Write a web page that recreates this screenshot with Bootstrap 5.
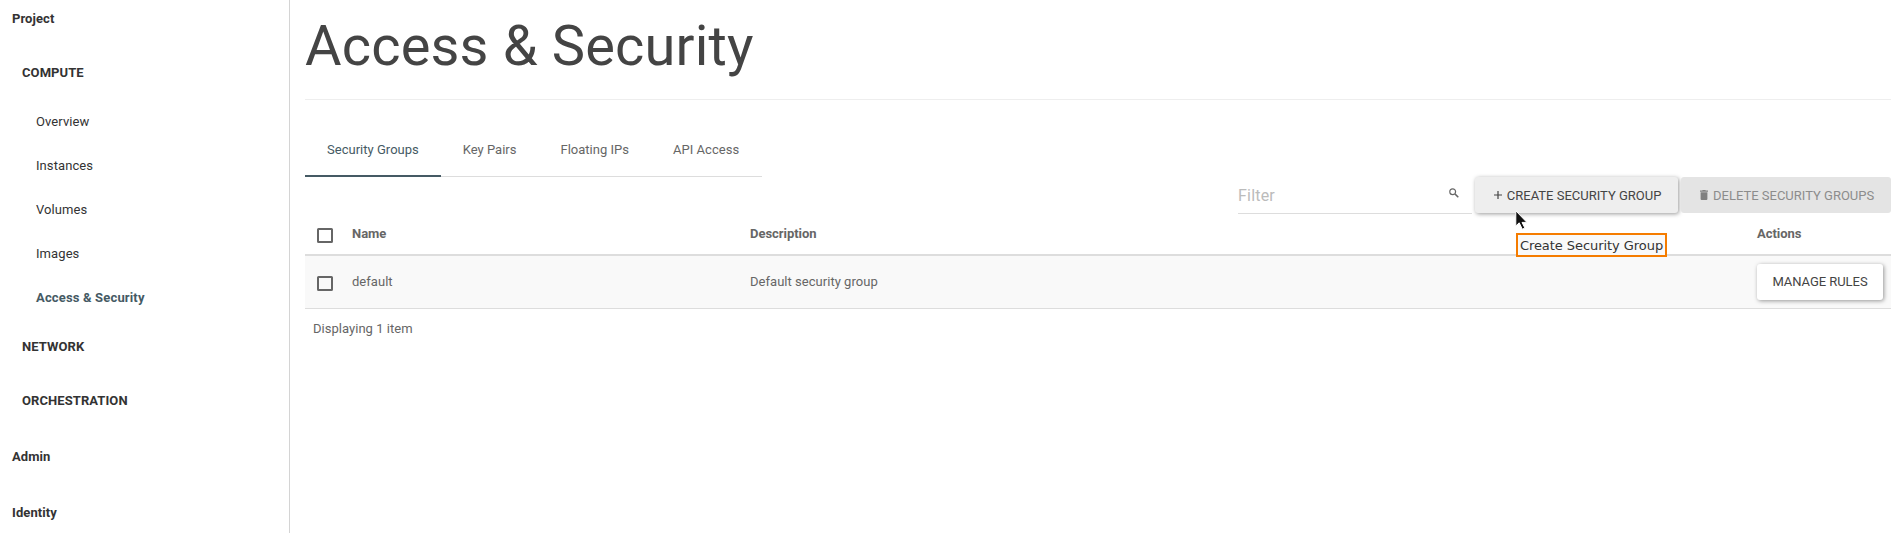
<!DOCTYPE html>
<html lang="en">
<head>
<meta charset="utf-8">
<title>Access &amp; Security</title>
<link href="https://cdn.jsdelivr.net/npm/bootstrap@5.3.0/dist/css/bootstrap.min.css" rel="stylesheet">
<style>
body{font:13px/24px Roboto,sans-serif;letter-spacing:.03px;color:#666;background:#fff}
.shell{height:533px}
.side{width:290px;border-right:1px solid #d4d4d4;color:#333;letter-spacing:.08px}
.side a{color:inherit;text-decoration:none;display:flex;align-items:center;flex:none}
.side .dash{height:56px;padding:2px 0 0 12px;font-weight:700}
.side .dash.first{height:46px;padding:0 0 9px 12px}
.side .group{height:54px;padding-left:22px;font-weight:700;text-transform:uppercase}
.side .panel{height:44px;padding-left:36px}
.side .panel.current{font-weight:700;color:#455a64;letter-spacing:.16px}
.main{padding:0 9px 0 15px}
.title{font-size:56px;line-height:62px;font-weight:400;color:#444;margin:15px 0 0;letter-spacing:.17px}
.head{height:100px;border-bottom:1px solid #eee}
.tabs{margin-top:25px;height:52px}
.tabs .nav-link{color:#666;padding:13px 22px 0;height:52px;box-shadow:inset 0 -1px #ddd;border-radius:0;letter-spacing:.02px}
.tabs .nav-link.active{color:#455a64;box-shadow:inset 0 -2px #455a64}
.tabs .api{letter-spacing:.05px;padding-right:23px}
.tabs .snug{letter-spacing:0}
.tools{height:36px}
.filter{width:234px;height:37px;box-shadow:inset 0 -1px #ddd;margin-right:3px}
.filter input{border:0;background:none;padding:0;margin-top:7px;width:200px;font-size:16px;outline:0;letter-spacing:.2px}
.filter input::placeholder{color:#bbb;opacity:1}
.filter svg{margin:11px 13px 0 0}
.act{font-size:13px;line-height:24px;height:36px;padding:7px 0 5px;border:0;border-radius:3px;text-transform:uppercase;color:#444;letter-spacing:0;white-space:nowrap}
.raised{box-shadow:1px 1px 4px rgba(0,0,0,.4)}
.create{width:203px;background:#eee;margin-right:3px}
.act.create{padding-left:2px}
.act svg{margin-right:2px}
.act.delete,.act.delete:disabled{width:210px;background:#e4e4e4;color:#8c8c8c;opacity:1;padding-left:2px}
.act.rules{width:126px;background:#fff;padding:6px 0;letter-spacing:-.05px}
.grid{table-layout:fixed;width:1586px;margin:0;border-collapse:separate;border-spacing:0}
.grid th,.grid td{padding:0;color:#666;vertical-align:middle;background:none;box-shadow:none}
.grid thead th{height:43px;border-bottom:2px solid #ddd;font-weight:700;letter-spacing:-.04px}
.grid tbody td{height:53px;border-bottom:1px solid #ddd;background:#f9f9f9}
.box{appearance:none;display:block;width:16px;height:15px;margin:4px 0 0 12px;border:2px solid #666;border-radius:1.5px;background:none}
.grid tbody .box{margin-top:2px}
.summary{padding:8px 0 0 8px}
.tip{position:absolute;left:1516px;top:233px;width:151px;height:24px;border:2px solid #f57c00;background:#f9f9f9;color:#333;font:13px/22px "DejaVu Sans",sans-serif;letter-spacing:-.06px;text-align:center;white-space:nowrap}
.pointer{position:absolute;left:1515px;top:210px}
</style>
</head>
<body class="overflow-hidden">
<div class="shell d-flex position-relative overflow-hidden">
  <nav class="side d-flex flex-column flex-shrink-0 overflow-hidden">
    <a class="dash first" href="#">Project</a>
    <a class="group" href="#">Compute</a>
    <a class="panel" href="#">Overview</a>
    <a class="panel" href="#">Instances</a>
    <a class="panel" href="#">Volumes</a>
    <a class="panel" href="#">Images</a>
    <a class="panel current" href="#">Access &amp; Security</a>
    <a class="group" href="#">Network</a>
    <a class="group" href="#">Orchestration</a>
    <a class="dash" href="#">Admin</a>
    <a class="dash" href="#">Identity</a>
  </nav>
  <main class="main flex-grow-1">
    <header class="head d-flex align-items-start"><h1 class="title">Access &amp; Security</h1></header>
    <ul class="nav tabs">
      <li class="nav-item"><a class="nav-link active" href="#">Security Groups</a></li>
      <li class="nav-item"><a class="nav-link snug" href="#">Key Pairs</a></li>
      <li class="nav-item"><a class="nav-link snug" href="#">Floating IPs</a></li>
      <li class="nav-item"><a class="nav-link api" href="#">API Access</a></li>
    </ul>
    <div class="tools d-flex justify-content-end">
      <div class="filter d-flex justify-content-between align-items-start">
        <input type="text" placeholder="Filter" aria-label="Filter">
        <svg width="10" height="10" viewBox="0 0 10 10" fill="none" stroke="#666"><circle cx="3.7" cy="3.7" r="2.900" stroke-width="1.2"/><path d="M5.9 5.9 9.3 9.3" stroke-width="1.5"/></svg>
      </div>
      <button class="btn act raised create"><svg width="8" height="8" viewBox="0 0 8 8" style="vertical-align:1px"><path d="M4 0v8M0 4h8" stroke="#444" stroke-width="1.2"/></svg> Create Security Group</button>
      <button class="btn act delete" disabled><svg width="8" height="10" viewBox="0 0 8 10" style="vertical-align:0"><path d="M0 .6h2.2L2.7 0h2.6l.5.6H8v1.1H0zM.6 2.300h6.800V9q0 1-1 1H1.600q-1 0-1-1z" fill="#808080"/></svg> Delete Security Groups</button>
    </div>
    <table class="table grid">
      <colgroup><col style="width:47px"><col style="width:398px"><col style="width:1007px"><col></colgroup>
      <thead><tr><th><input type="checkbox" class="box" aria-label="Select all"></th><th>Name</th><th>Description</th><th>Actions</th></tr></thead>
      <tbody><tr><td><input type="checkbox" class="box" aria-label="Select default"></td><td>default</td><td>Default security group</td><td><button class="btn act raised rules">Manage Rules</button></td></tr></tbody>
    </table>
    <div class="summary">Displaying 1 item</div>
  </main>
  <div class="tip">Create Security Group</div>
  <svg class="pointer" width="14" height="21" viewBox="0 0 14 21"><path d="M.8.8v15.200l3.400-3.200 3.100 6.400 2.600-1.200-2.900-5.600h4.900z" fill="#111" stroke="#fff" stroke-width="1"/></svg>
</div>
<script src="https://cdn.jsdelivr.net/npm/bootstrap@5.3.0/dist/js/bootstrap.bundle.min.js"></script>
</body>
</html>
